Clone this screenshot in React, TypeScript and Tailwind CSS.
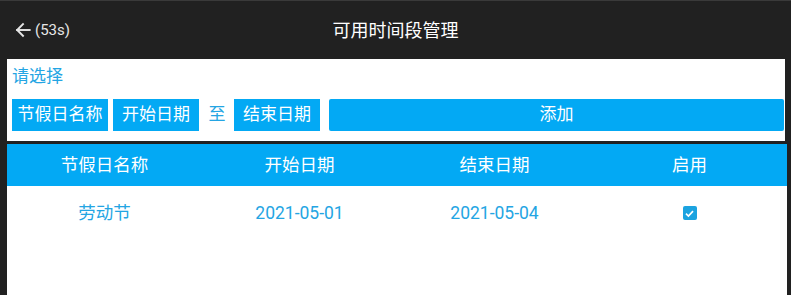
import React from "react";

const rows = [
  { name: "劳动节", start: "2021-05-01", end: "2021-05-04", enabled: true },
];

export default function App() {
  return (
    <div
      className="h-[295px] w-[791px] overflow-hidden bg-[#212121] flex flex-col"
      style={{ fontFamily: "Roboto, 'Noto Sans CJK SC', sans-serif" }}
    >
      {/* HEADER */}
      <div className="h-[59px] shrink-0 relative flex items-center border-t border-[#3a3a3a]">
        <div className="flex items-center pl-[13px] gap-[2px] text-[#e6e6e6]">
          <svg width="20" height="20" viewBox="0 0 24 24" fill="none" stroke="currentColor" strokeWidth="2.3" strokeLinecap="square">
            <path d="M20 12H5" />
            <path d="M12 5l-7 7 7 7" />
          </svg>
          <span className="text-[15px]">(53s)</span>
        </div>
        <div className="absolute left-0 right-0 text-center text-[18px] text-white pointer-events-none">
          可用时间段管理
        </div>
      </div>

      {/* FORM */}
      <div className="ml-[7px] mr-[6px] bg-white h-[82px] shrink-0 pl-[5px] pr-[1px] pt-[6px]">
        <div className="text-[17px] leading-[22px] text-[#24a5e3]">请选择</div>
        <div className="flex items-center mt-[12px] h-[32px]">
          <div className="h-full w-[96px] bg-[#03a9f4] text-white text-[17px] flex items-center justify-center">节假日名称</div>
          <div className="h-full w-[86px] ml-[5px] bg-[#03a9f4] text-white text-[17px] flex items-center justify-center">开始日期</div>
          <div className="w-[35px] pl-[1px] text-center text-[17px] text-[#24a5e3]">至</div>
          <div className="h-full w-[86px] bg-[#03a9f4] text-white text-[17px] flex items-center justify-center">结束日期</div>
          <div className="h-full flex-1 ml-[9px] rounded-[2px] bg-[#03a9f4] text-white text-[17px] flex items-center justify-center">
            添加
          </div>
        </div>
      </div>

      {/* TABLE */}
      <div className="ml-[7px] mr-[4px] mt-[3px] flex-1 bg-white">
        <div className="grid grid-cols-4 h-[42px] bg-[#03a9f4] text-white text-[17.5px] items-center text-center">
          <div>节假日名称</div>
          <div>开始日期</div>
          <div>结束日期</div>
          <div>启用</div>
        </div>
        {rows.map((r) => (
          <div key={r.name} className="grid grid-cols-4 h-[54px] items-center text-center text-[17.5px] text-[#24a5e3]">
            <div>{r.name}</div>
            <div>{r.start}</div>
            <div>{r.end}</div>
            <div className="flex justify-center">
              <div className="w-[14px] h-[14px] rounded-[2px] bg-[#1ba3e0] flex items-center justify-center">
                {r.enabled && (
                  <svg width="11" height="11" viewBox="0 0 10 10" fill="none" stroke="white" strokeWidth="1.5">
                    <path d="M1.8 5.2l2.2 2.1 4.2-4.5" />
                  </svg>
                )}
              </div>
            </div>
          </div>
        ))}
      </div>
    </div>
  );
}
